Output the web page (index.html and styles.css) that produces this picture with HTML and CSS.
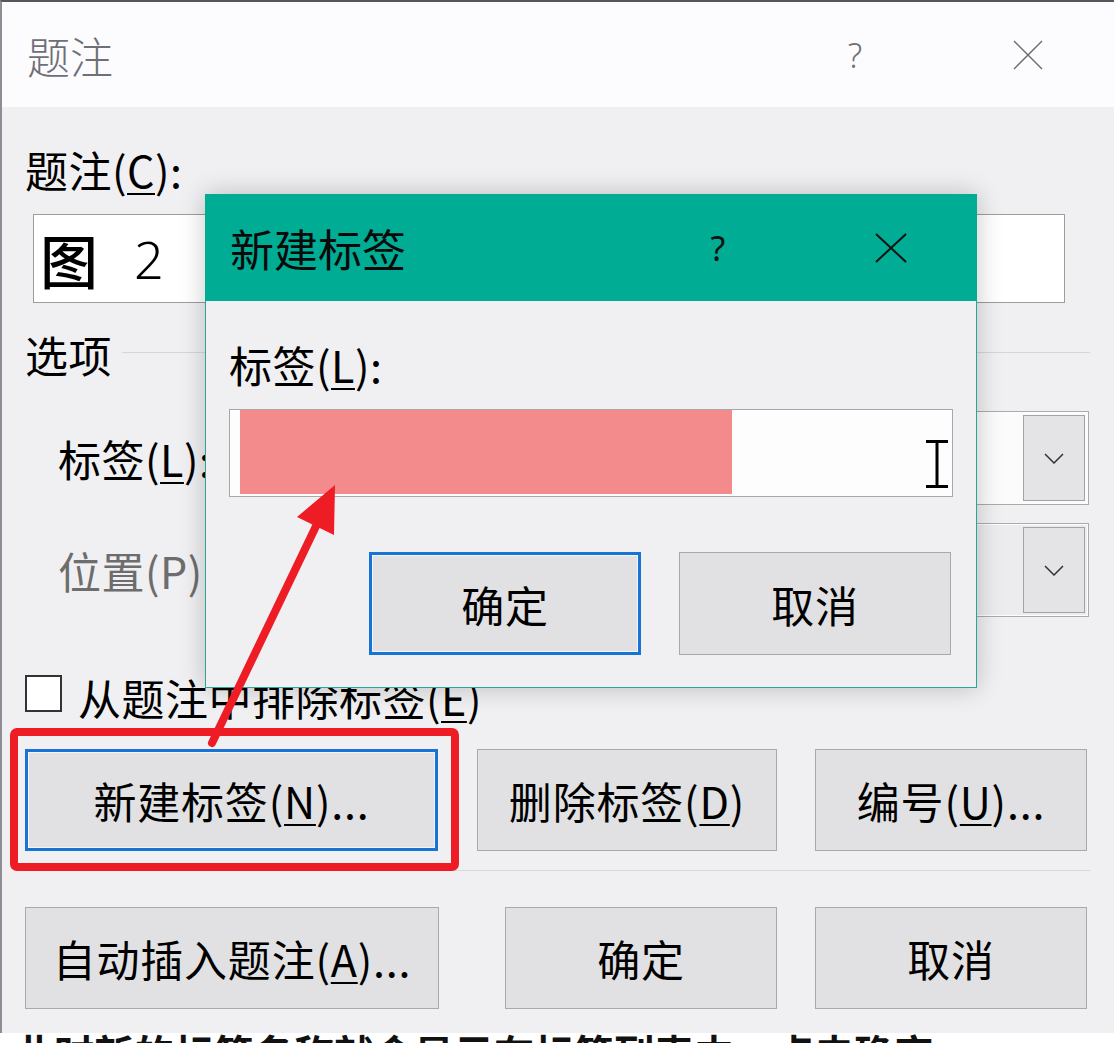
FILE: index.html
```html
<!DOCTYPE html>
<html lang="zh-CN">
<head>
<meta charset="utf-8">
<title>题注</title>
<link rel="stylesheet" href="styles.css">
</head>
<body>
<div class="page">
  <div class="dialog">
    <div class="titlebar">
      <div class="title">题注</div>
      <div class="help">?</div>
      <div class="close">
        <svg width="30" height="30" viewBox="0 0 30 30"><path d="M1 1 L29 29 M29 1 L1 29" stroke="#6a6a70" stroke-width="1.4" fill="none"/></svg>
      </div>
    </div>
    <div class="content">
      <div class="lbl lbl-caption">题注(<u>C</u>):</div>
      <div class="caption-input"><span class="fig">图</span><span class="num">2</span></div>
      <div class="options"><span class="lbl">选项</span><span class="rule"></span></div>
      <div class="field-row row-label">
        <span class="lbl field-lbl">标签(<u>L</u>):</span>
        <div class="dropdown">
          <div class="dd-btn"><svg width="20" height="11" viewBox="0 0 20 11"><polyline points="1,1 10,10 19,1" fill="none" stroke="#333" stroke-width="1.5"/></svg></div>
        </div>
      </div>
      <div class="field-row row-pos">
        <span class="lbl field-lbl disabled">位置(P):</span>
        <div class="dropdown dd-disabled">
          <div class="dd-btn"><svg width="20" height="11" viewBox="0 0 20 11"><polyline points="1,1 10,10 19,1" fill="none" stroke="#333" stroke-width="1.5"/></svg></div>
        </div>
      </div>
      <div class="check-row">
        <span class="checkbox"></span>
        <span class="lbl">从题注中排除标签(<u>E</u>)</span>
      </div>
      <div class="btn-row row1">
        <div class="btn focus w413">新建标签(<u>N</u>)...</div>
        <div class="btn w300">删除标签(<u>D</u>)</div>
        <div class="btn w272">编号(<u>U</u>)...</div>
      </div>
      <div class="separator"></div>
      <div class="btn-row row2">
        <div class="btn w414">自动插入题注(<u>A</u>)...</div>
        <div class="btn w272 gap66">确定</div>
        <div class="btn w272">取消</div>
      </div>
    </div>
  </div>
  <div class="doc-strip">此时新的标签名称就会显示在标签列表中，点击确定</div>

  <div class="popup">
    <div class="p-titlebar">
      <div class="p-title">新建标签</div>
      <div class="p-help">?</div>
      <div class="p-close">
        <svg width="32" height="30" viewBox="0 0 32 30"><path d="M1 1 L31 29 M31 1 L1 29" stroke="#111" stroke-width="2" fill="none"/></svg>
      </div>
    </div>
    <div class="p-body">
      <div class="lbl p-lbl">标签(<u>L</u>):</div>
      <div class="p-input">
        <div class="highlight"></div>
        <svg class="ibeam" width="26" height="48" viewBox="0 0 26 48"><path d="M2 1.5 H24 M2 46.5 H24 M13 1.5 V46.5" stroke="#000" stroke-width="3" fill="none"/></svg>
      </div>
      <div class="p-buttons">
        <div class="btn focus w272">确定</div>
        <div class="btn w272">取消</div>
      </div>
    </div>
  </div>

  <div class="red-box"></div>
  <svg class="arrow" width="1114" height="1044" viewBox="0 0 1114 1044">
    <line x1="212" y1="743" x2="318" y2="522" stroke="#ee1c24" stroke-width="8" stroke-linecap="round"/>
    <polygon points="335,485 297,517 334,535" fill="#ee1c24"/>
  </svg>
</div>
</body>
</html>
```
FILE: styles.css
```css
* { box-sizing: border-box; }
html, body { margin: 0; padding: 0; }
body {
  width: 1114px;
  height: 1044px;
  overflow: hidden;
  background: #ffffff;
  font-family: "Noto Sans CJK SC", "Noto Sans", sans-serif;
  color: #000;
}
.page {
  position: relative;
  width: 1114px;
  height: 1044px;
  overflow: hidden;
}
u { text-decoration-thickness: 2px; text-underline-offset: 5px; }

.dialog {
  height: 1033px;
  background: #f0eff1;
  border-left: 2px solid #8d8d95;
  border-top: 2px solid #55555f;
}
.titlebar {
  height: 105px;
  background: #fcfbfd;
  display: flex;
  align-items: center;
  padding-left: 25px;
}
.title {
  flex: 1;
  font-size: 43px;
  line-height: 50px;
  font-weight: 300;
  color: #6f6f78;
}
.help {
  width: 30px;
  text-align: center;
  font-size: 34px;
  line-height: 40px;
  font-weight: 300;
  color: #6f6f78;
  font-family: "Noto Sans", sans-serif;
}
.close {
  width: 30px;
  height: 30px;
  margin-left: 143px;
  margin-right: 71px;
  display: flex;
}

.content {
  padding: 0 24px 0 23px;
}
.lbl {
  font-size: 43px;
  line-height: 50px;
  letter-spacing: 0.5px;
  white-space: nowrap;
}
.lbl-caption {
  margin-top: 37px;
  height: 50px;
}
.caption-input {
  margin-top: 20px;
  margin-left: 8px;
  width: 1032px;
  height: 89px;
  background: #fff;
  border: 1px solid #9d9d9d;
  display: flex;
  align-items: center;
  padding-left: 6px;
}
.fig {
  font-size: 58px;
  line-height: 60px;
  font-weight: 500;
}
.num {
  margin-left: 36px;
  font-size: 52px;
  line-height: 60px;
  font-weight: 300;
  font-family: "Noto Sans", sans-serif;
}
.options {
  margin-top: 26px;
  height: 50px;
  display: flex;
  align-items: center;
}
.rule {
  flex: 1;
  height: 1px;
  background: #d6d6d8;
  margin-left: 10px;
  margin-top: -4px;
}
.field-row {
  height: 94px;
  display: flex;
  align-items: center;
}
.row-label { margin-top: 32px; }
.row-pos { margin-top: 18px; }
.field-lbl { padding-left: 33px; }
.disabled { color: #6d6d6d; }
.dropdown {
  margin-left: auto;
  margin-right: 1px;
  width: 868px;
  height: 94px;
  background: #fbfbfc;
  border: 1px solid #ababab;
  box-shadow: inset 0 0 0 1px #fdfdfd;
  display: flex;
  justify-content: flex-end;
  padding: 3px 3px 3px 0;
}
.dd-disabled { background: #ececee; }
.dd-btn {
  width: 62px;
  height: 100%;
  background: #e4e3e5;
  border: 1px solid #a3a3a3;
  display: flex;
  align-items: center;
  justify-content: center;
}
.check-row {
  margin-top: 55px;
  height: 50px;
  display: flex;
  align-items: flex-start;
}
.checkbox {
  width: 37px;
  height: 37px;
  margin-top: 3px;
  margin-right: 16px;
  background: #fff;
  border: 2px solid #333;
}
.btn-row {
  display: flex;
  height: 102px;
  gap: 38px;
}
.row1 { margin-top: 27px; }
.row1 .btn:nth-child(2) { margin-left: 1px; }
.row2 { margin-top: 36px; }
.btn {
  height: 102px;
  background: #e1e0e2;
  border: 1px solid #a9a9ab;
  display: flex;
  align-items: center;
  justify-content: center;
  font-size: 43px;
  line-height: 50px;
  letter-spacing: 0.8px;
  white-space: nowrap;
}
.btn.focus {
  border: 3px solid #1874d4;
  box-shadow: inset 0 0 0 1px #f2f6fb;
}
.w413 { width: 413px; }
.w414 { width: 414px; }
.w300 { width: 300px; }
.w272 { width: 272px; }
.gap66 { margin-left: 28px; }
.separator {
  margin-top: 19px;
  height: 1px;
  background: #d8d8da;
}
.doc-strip {
  height: 11px;
  overflow: hidden;
  font-size: 40px;
  line-height: 40px;
  font-weight: 700;
  padding-left: 14px;
  margin-top: -1px;
  color: #111;
  white-space: nowrap;
}

/* popup */
.popup {
  position: absolute;
  left: 205px;
  top: 194px;
  width: 772px;
  height: 494px;
  background: #f0eff1;
  border: 1px solid #2aa596;
  box-shadow: 0 0 24px rgba(0, 0, 0, 0.22);
}
.p-titlebar {
  height: 107px;
  margin: -1px -1px 0 -1px;
  background: #00ac94;
  display: flex;
  align-items: center;
  padding-left: 25px;
}
.p-title {
  flex: 1;
  font-size: 44px;
  line-height: 50px;
  color: #0a0a0a;
}
.p-help {
  width: 30px;
  text-align: center;
  font-size: 34px;
  line-height: 40px;
  color: #111;
  font-family: "Noto Sans", sans-serif;
}
.p-close {
  width: 32px;
  height: 30px;
  margin-left: 142px;
  margin-right: 70px;
  display: flex;
}
.p-body {
  padding-left: 23px;
}
.p-lbl {
  margin-top: 38px;
  height: 50px;
}
.p-input {
  margin-top: 20px;
  width: 724px;
  height: 88px;
  background: #fdfdfd;
  border: 1px solid #a8a8aa;
  display: flex;
  align-items: flex-start;
  padding-left: 10px;
}
.highlight {
  width: 492px;
  height: 84px;
  background: #f38a8c;
}
.ibeam {
  margin-left: auto;
  margin-right: 2px;
  margin-top: 30px;
}
.p-buttons {
  margin-top: 55px;
  padding-left: 140px;
  display: flex;
  gap: 38px;
}
.p-buttons .btn { height: 103px; }

.red-box {
  position: absolute;
  left: 10px;
  top: 728px;
  width: 449px;
  height: 143px;
  border: 8px solid #ee1c24;
  border-radius: 7px;
}
.arrow {
  position: absolute;
  left: 0;
  top: 0;
  pointer-events: none;
}
```
